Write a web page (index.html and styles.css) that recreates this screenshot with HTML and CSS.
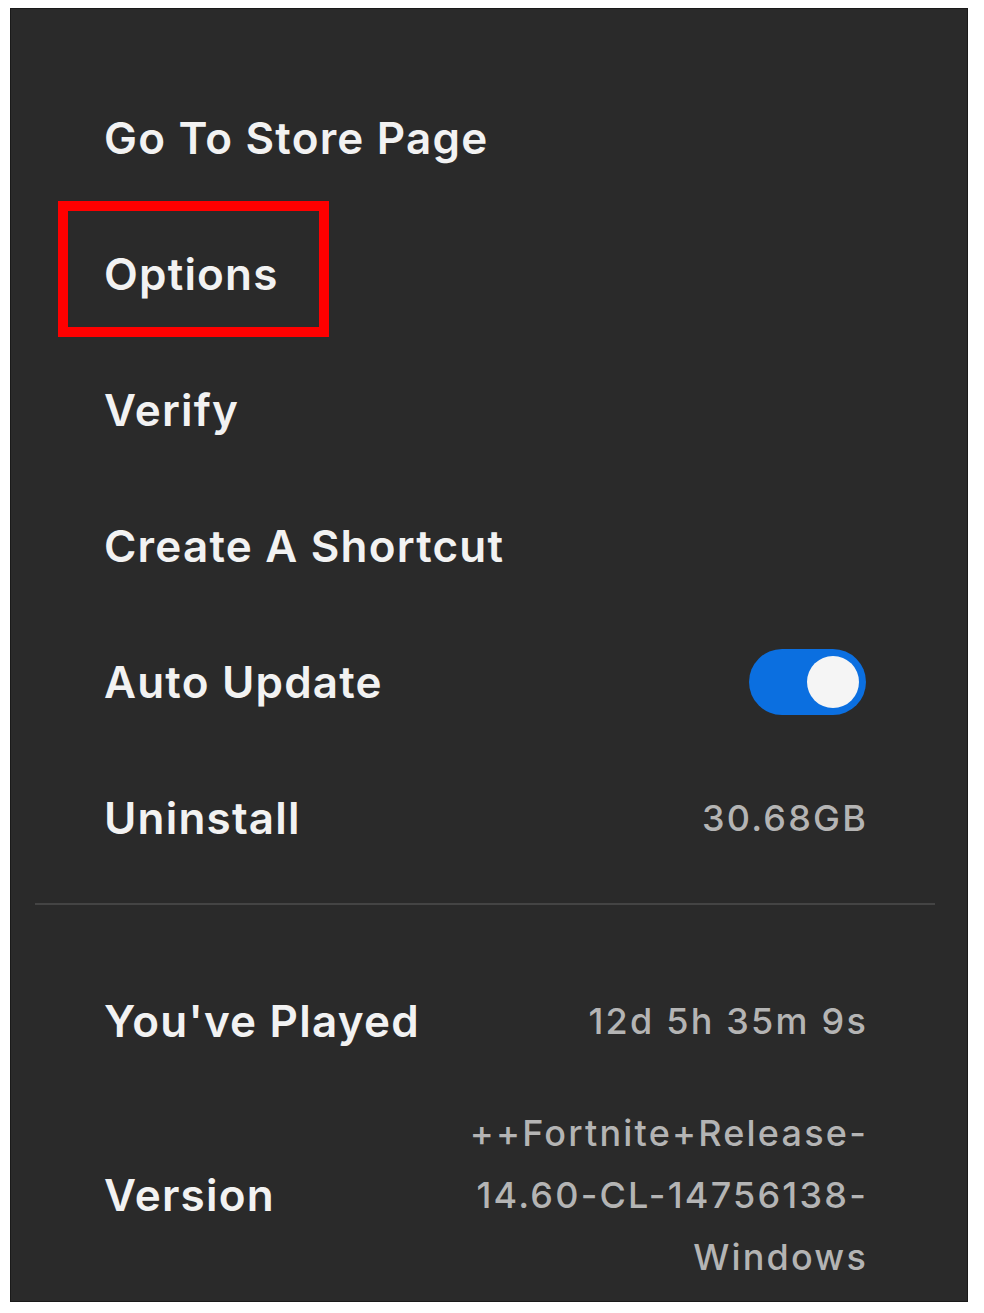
FILE: index.html
```html
<!DOCTYPE html>
<html lang="en">
<head>
  <meta charset="UTF-8">
  <title>Fortnite - Library menu</title>
<link rel="stylesheet" href="styles.css">
</head>
<body>
<div class="menu">
  <ul class="actions">
    <li class="row"><span class="label">Go To Store Page</span></li>
    <li class="row"><span class="label mark">Options<span class="box"></span></span></li>
    <li class="row"><span class="label">Verify</span></li>
    <li class="row"><span class="label">Create A Shortcut</span></li>
    <li class="row"><span class="label">Auto Update</span><span class="toggle on"><span class="knob"></span></span></li>
    <li class="row"><span class="label">Uninstall</span><span class="value">30.68GB</span></li>
  </ul>
  <hr class="divider">
  <ul class="info">
    <li class="row"><span class="label">You've Played</span><span class="value">12d 5h 35m 9s</span></li>
    <li class="row version"><span class="label">Version</span><span class="value">++Fortnite+Release-<br>14.60-CL-14756138-<br>Windows</span></li>
  </ul>
</div>
</body>
</html>
```

FILE: styles.css
```css
*{margin:0;padding:0;box-sizing:border-box}
body{background:#fff;font-family:Inter,"Noto Sans",sans-serif;}
ul{list-style:none}
.menu{margin:8px 0 0 10px;width:958px;height:1294px;background:#2a2a2a;border:1px solid #1a1a1a;padding-top:61px;}
.row{display:flex;align-items:center;justify-content:space-between;height:136px;padding:0 101px 0 93px;}
.label{font-size:44px;font-weight:600;color:#f2f2f2;letter-spacing:1.2px;}
.value{font-size:36px;font-weight:500;color:#b4b4b4;text-align:right;letter-spacing:2.2px;margin-right:-2px;}
.mark{position:relative;}
.box{position:absolute;left:-46px;top:-46px;width:271px;height:136px;border:10px solid #ff0000;}
.toggle{display:flex;align-items:center;width:117px;height:66px;border-radius:33px;background:#0b6fe0;padding:0 7px;}
.toggle.on{justify-content:flex-end;}
.knob{width:52px;height:52px;border-radius:50%;background:#f5f5f5;}
.divider{border:0;height:2px;background:#444;margin:17px 32px 0 24px;}
.info{padding-top:48px;}
.version{height:186px;margin-top:13px;}
.version .value{line-height:62px;}
```
